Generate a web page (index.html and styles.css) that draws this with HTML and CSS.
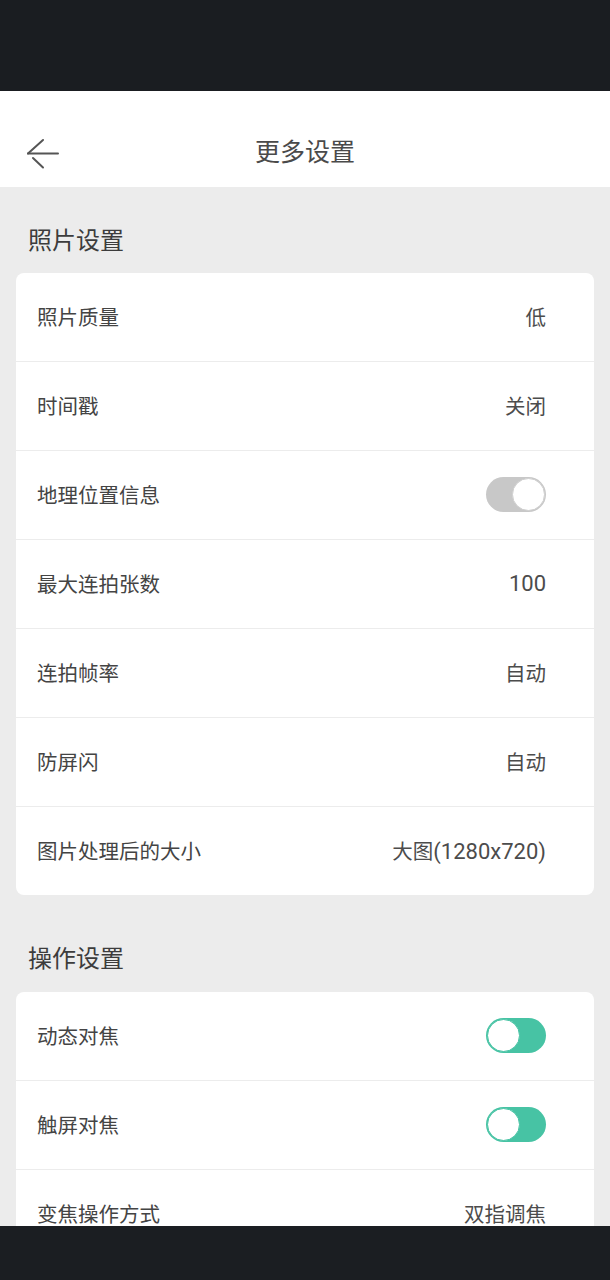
FILE: index.html
```html
<!DOCTYPE html>
<html lang="zh-CN">
<head>
<meta charset="utf-8">
<title>更多设置</title>
<link rel="stylesheet" href="styles.css">
</head>
<body>
<div class="screen">
  <div class="statusbar"></div>
  <header class="header">
    <div class="navbar">
      <button class="back" aria-label="返回">
        <svg width="32" height="32" viewBox="0 0 32 32" fill="none" stroke="#555" stroke-width="2" stroke-linecap="round">
          <path d="M1 15.5 H31"/>
          <path d="M1 15.5 L16 2"/>
          <path d="M6 20 L16 29.5"/>
        </svg>
      </button>
      <h1 class="title">更多设置</h1>
    </div>
  </header>
  <main class="content">
    <section class="group">
      <h2 class="group-title">照片设置</h2>
      <div class="card">
        <div class="row"><span class="label">照片质量</span><span class="value">低</span></div>
        <div class="row"><span class="label">时间戳</span><span class="value">关闭</span></div>
        <div class="row"><span class="label">地理位置信息</span><span class="toggle off"><span class="knob"></span></span></div>
        <div class="row"><span class="label">最大连拍张数</span><span class="value num">100</span></div>
        <div class="row"><span class="label">连拍帧率</span><span class="value">自动</span></div>
        <div class="row"><span class="label">防屏闪</span><span class="value">自动</span></div>
        <div class="row"><span class="label">图片处理后的大小</span><span class="value">大图<span class="num">(1280x720)</span></span></div>
      </div>
    </section>
    <section class="group second">
      <h2 class="group-title">操作设置</h2>
      <div class="card">
        <div class="row"><span class="label">动态对焦</span><span class="toggle on"><span class="knob"></span></span></div>
        <div class="row"><span class="label">触屏对焦</span><span class="toggle on"><span class="knob"></span></span></div>
        <div class="row"><span class="label">变焦操作方式</span><span class="value">双指调焦</span></div>
      </div>
    </section>
  </main>
  <div class="navbar-bottom"></div>
</div>
</body>
</html>
```
FILE: styles.css
```css
* { box-sizing: border-box; }
html, body { margin: 0; padding: 0; }
body {
  font-family: Roboto, "Noto Sans CJK SC", "Noto Sans", sans-serif;
  background: #ececec;
}
.screen {
  width: 610px;
  height: 1280px;
  display: flex;
  flex-direction: column;
  overflow: hidden;
  background: #ececec;
}
.statusbar {
  height: 91px;
  flex: none;
  background: #1a1d21;
}
.header {
  height: 96px;
  flex: none;
  background: #ffffff;
  padding-top: 28px;
}
.navbar {
  height: 68px;
  position: relative;
  display: flex;
  align-items: center;
  justify-content: center;
}
.back {
  position: absolute;
  left: 27px;
  top: 19px;
  width: 32px;
  height: 32px;
  padding: 0;
  border: 0;
  background: none;
  display: block;
}
.back svg { display: block; }
.title {
  margin: 0;
  font-size: 25px;
  font-weight: 400;
  color: #4a4a4a;
  line-height: 34px;
}
.content {
  flex: 1;
  overflow: hidden;
  padding: 34px 16px 0;
}
.group.second { margin-top: 44px; }
.group-title {
  margin: 0 0 12px 12px;
  height: 40px;
  line-height: 40px;
  font-size: 24px;
  font-weight: 400;
  color: #3c3c3c;
}
.group.second .group-title { margin-bottom: 13px; }
.card {
  background: #ffffff;
  border-radius: 8px;
  overflow: hidden;
}
.row {
  height: 89px;
  display: flex;
  align-items: center;
  justify-content: space-between;
  padding: 0 48px 2px 21px;
  border-top: 1px solid #ececec;
}
.row:first-child { height: 88px; border-top: 0; }
.label {
  font-size: 20.5px;
  color: #444444;
}
.value {
  font-size: 20.5px;
  color: #4c4c4c;
}
.num { font-size: 22px; }
.toggle {
  width: 60px;
  height: 35px;
  border-radius: 18px;
  display: flex;
  align-items: center;
  padding: 1px;
}
.toggle .knob {
  width: 33px;
  height: 33px;
  border-radius: 50%;
  background: #ffffff;
}
.toggle.off {
  background: #c8c8c8;
  justify-content: flex-end;
}
.toggle.off .knob { border: 1.5px solid #cfcfcf; }
.toggle.on {
  background: #47c3a4;
  justify-content: flex-start;
}
.toggle.on .knob { border: 1.5px solid #47c3a4; }
.navbar-bottom {
  height: 54px;
  flex: none;
  background: #1b1e22;
}
```
